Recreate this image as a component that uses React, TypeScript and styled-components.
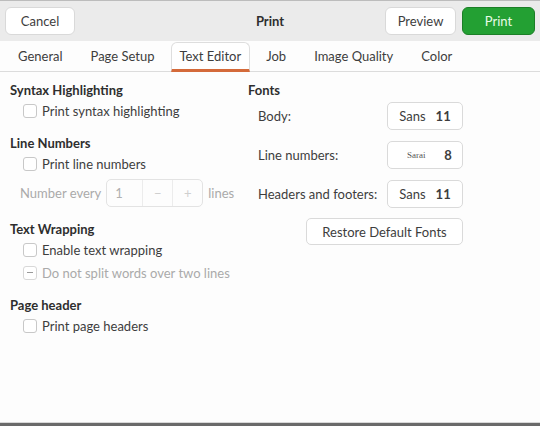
import styled, { createGlobalStyle } from 'styled-components';

const Global = createGlobalStyle`
  html, body { margin: 0; padding: 0; }
  body {
    background: #fdfdfd;
    font-family: Lato, 'Noto Sans', sans-serif;
    color: #3d3d3d;
  }
`;

const Window = styled.div`
  width: 540px;
  height: 426px;
  display: flex;
  flex-direction: column;
  background: #fdfdfd;
  overflow: hidden;
`;

const HeaderBar = styled.div`
  height: 41px;
  box-sizing: border-box;
  border-top: 1px solid #bcbcbc;
  background: #ebebeb;
  display: grid;
  grid-template-columns: 1fr auto 1fr;
  align-items: center;
  padding: 0 5px;
`;

const Title = styled.div`
  font-weight: 700;
  font-size: 13px;
  color: #2e2e2e;
`;

const HeaderButton = styled.button<{ $primary?: boolean; $w: number }>`
  height: 28px;
  width: ${p => p.$w}px;
  padding: 0;
  border-radius: 6px;
  font-family: inherit;
  font-size: 13px;
  border: 1px solid ${p => (p.$primary ? '#1c7f27' : '#d9d9d9')};
  background: ${p => (p.$primary ? '#23a033' : '#ffffff')};
  color: ${p => (p.$primary ? '#e9fbe7' : '#3d3d3d')};
`;

const Left = styled.div`
  display: flex;
`;

const Right = styled.div`
  display: flex;
  justify-content: flex-end;
  gap: 6px;
`;

const TabBar = styled.div`
  height: 31px;
  display: flex;
  align-items: stretch;
  background: #fdfdfd;
  border-bottom: 1px solid #dcdcdc;
  padding-left: 4px;
  box-sizing: border-box;
`;

const Tab = styled.div<{ $active?: boolean }>`
  display: flex;
  align-items: center;
  padding: 0 ${p => (p.$active ? 8 : 13)}px;
  margin: 0 ${p => (p.$active ? 2 : 0)}px;
  font-size: 13px;
  color: #3d3d3d;
  box-sizing: border-box;
  border: 1px solid ${p => (p.$active ? '#dedede' : 'transparent')};
  border-bottom: 3px solid ${p => (p.$active ? '#d46a3a' : 'transparent')};
  border-radius: 6px 6px 0 0;
  margin-top: 1px;
  margin-bottom: -1px;
  background: ${p => (p.$active ? '#ffffff' : 'transparent')};
`;

const Body = styled.div`
  flex: 1;
  display: grid;
  grid-template-columns: 238px 1fr;
  padding: 9px 0 0 10px;
`;

const Column = styled.div`
  display: flex;
  flex-direction: column;
`;

const SectionTitle = styled.div`
  font-weight: 700;
  font-size: 13px;
  color: #2e2e2e;
  height: 18px;
  line-height: 18px;
`;

const Section = styled.div`
  display: flex;
  flex-direction: column;
  margin-bottom: 12px;
`;

const CheckRow = styled.label<{ $disabled?: boolean }>`
  display: flex;
  align-items: center;
  gap: 5px;
  padding-left: 13px;
  height: 23px;
  font-size: 13px;
  color: ${p => (p.$disabled ? '#aaaaaa' : '#3d3d3d')};
`;

const Box = styled.span<{ $disabled?: boolean }>`
  width: 12px;
  height: 12px;
  border: 1px solid ${p => (p.$disabled ? '#d8d8d8' : '#c8c8c8')};
  border-radius: 3px;
  background: #ffffff;
  display: flex;
  align-items: center;
  justify-content: center;
  &::after {
    content: '';
    display: ${p => (p.$disabled ? 'block' : 'none')};
    width: 6px;
    height: 1px;
    background: #9a9a9a;
  }
`;

const SpinRow = styled.div`
  display: flex;
  align-items: center;
  gap: 5px;
  padding-left: 10px;
  height: 30px;
  margin-top: 3px;
  font-size: 13px;
  color: #aaaaaa;
`;

const Spin = styled.div`
  display: flex;
  height: 28px;
  width: 97px;
  box-sizing: border-box;
  border: 1px solid #e3e3e3;
  border-radius: 5px;
  background: #fdfdfd;
`;

const SpinEntry = styled.div`
  flex: 1;
  display: flex;
  align-items: center;
  padding-left: 8px;
  color: #b0b0b0;
`;

const SpinButton = styled.div`
  width: 29px;
  display: flex;
  align-items: center;
  justify-content: center;
  border-left: 1px solid #ececec;
  color: #cfcfcf;
  font-size: 13px;
`;

const FontGrid = styled.div`
  display: grid;
  grid-template-columns: 129px 76px;
  row-gap: 11px;
  padding-left: 10px;
  margin-top: 3px;
  align-items: center;
`;

const FontLabel = styled.div`
  font-size: 13px;
  color: #3d3d3d;
`;

const FontButton = styled.div`
  height: 28px;
  box-sizing: border-box;
  border: 1px solid #dadada;
  border-radius: 5px;
  background: #ffffff;
  display: flex;
  align-items: center;
  justify-content: center;
  gap: 10px;
  font-size: 13px;
  color: #3d3d3d;
`;

const FontName = styled.span<{ $serif?: boolean }>`
  font-family: ${p => (p.$serif ? "'Liberation Serif', serif" : 'inherit')};
  font-size: ${p => (p.$serif ? 9 : 13)}px;
  width: ${p => (p.$serif ? '36px' : 'auto')};
  text-align: center;
  color: ${p => (p.$serif ? '#555555' : 'inherit')};
`;

const FontSize = styled.span`
  font-weight: 700;
`;

const RestoreButton = styled.div`
  margin: 10px 0 0 58px;
  width: 157px;
  height: 27px;
  box-sizing: border-box;
  border: 1px solid #dadada;
  border-radius: 5px;
  background: #ffffff;
  display: flex;
  align-items: center;
  justify-content: center;
  font-size: 13px;
  color: #3d3d3d;
`;

const BottomEdge = styled.div`
  height: 3px;
  border-top: 1px solid #d8d8d8;
  background: #6a6a6a;
`;

const tabs = ['General', 'Page Setup', 'Text Editor', 'Job', 'Image Quality', 'Color'];

function Check({ label, disabled }: { label: string; disabled?: boolean }) {
  return (
    <CheckRow $disabled={disabled}>
      <Box $disabled={disabled} />
      {label}
    </CheckRow>
  );
}

export default function App() {
  return (
    <Window>
      <Global />
      <HeaderBar>
        <Left>
          <HeaderButton $w={70}>Cancel</HeaderButton>
        </Left>
        <Title>Print</Title>
        <Right>
          <HeaderButton $w={71}>Preview</HeaderButton>
          <HeaderButton $w={73} $primary>
            Print
          </HeaderButton>
        </Right>
      </HeaderBar>
      <TabBar>
        {tabs.map(t => (
          <Tab key={t} $active={t === 'Text Editor'}>
            {t}
          </Tab>
        ))}
      </TabBar>
      <Body>
        <Column>
          <Section>
            <SectionTitle>Syntax Highlighting</SectionTitle>
            <Check label="Print syntax highlighting" />
          </Section>
          <Section>
            <SectionTitle>Line Numbers</SectionTitle>
            <Check label="Print line numbers" />
            <SpinRow>
              Number every
              <Spin>
                <SpinEntry>1</SpinEntry>
                <SpinButton>−</SpinButton>
                <SpinButton>+</SpinButton>
              </Spin>
              lines
            </SpinRow>
          </Section>
          <Section>
            <SectionTitle>Text Wrapping</SectionTitle>
            <Check label="Enable text wrapping" />
            <Check label="Do not split words over two lines" disabled />
          </Section>
          <Section>
            <SectionTitle>Page header</SectionTitle>
            <Check label="Print page headers" />
          </Section>
        </Column>
        <Column>
          <SectionTitle>Fonts</SectionTitle>
          <FontGrid>
            <FontLabel>Body:</FontLabel>
            <FontButton>
              <FontName>Sans</FontName>
              <FontSize>11</FontSize>
            </FontButton>
            <FontLabel>Line numbers:</FontLabel>
            <FontButton>
              <FontName $serif>Sarai</FontName>
              <FontSize>8</FontSize>
            </FontButton>
            <FontLabel>Headers and footers:</FontLabel>
            <FontButton>
              <FontName>Sans</FontName>
              <FontSize>11</FontSize>
            </FontButton>
          </FontGrid>
          <RestoreButton>Restore Default Fonts</RestoreButton>
        </Column>
      </Body>
      <BottomEdge />
    </Window>
  );
}
